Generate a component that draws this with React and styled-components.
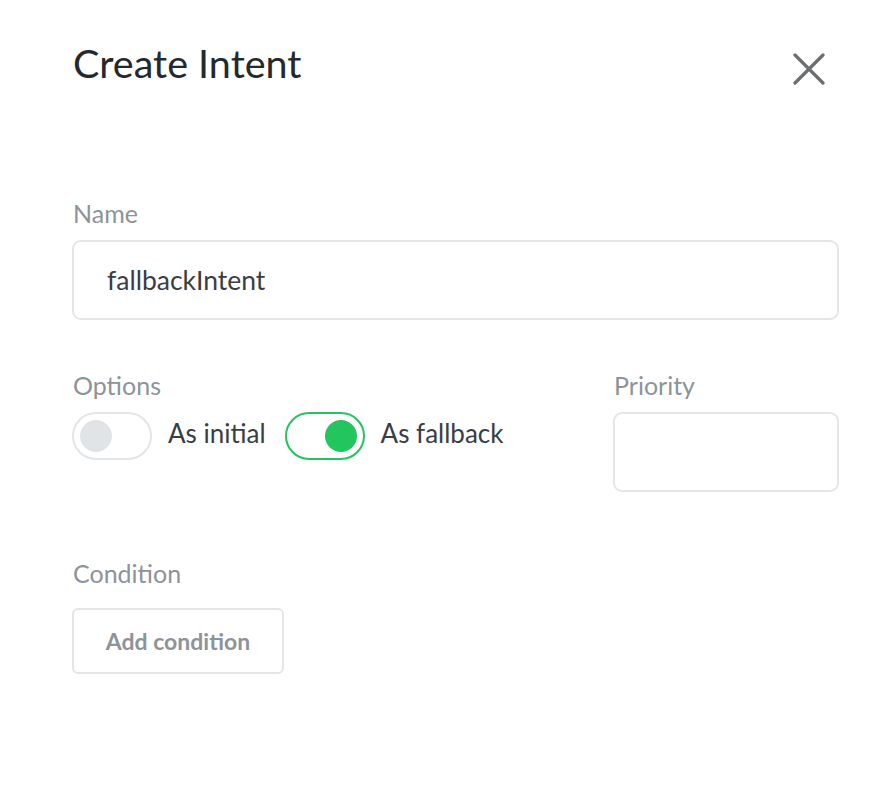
import React from "react";
import styled, { createGlobalStyle } from "styled-components";

const Global = createGlobalStyle`
  html, body { margin: 0; padding: 0; background: #fff; }
  body { font-family: "Lato", "Open Sans", sans-serif; -webkit-font-smoothing: antialiased; }
  * { box-sizing: border-box; }
`;

const Panel = styled.div`
  width: 892px;
  height: 808px;
  padding: 40px 53px 0 72px;
  display: flex;
  flex-direction: column;
`;

const Header = styled.div`
  display: flex;
  justify-content: space-between;
  align-items: flex-start;
  margin-bottom: 112px;
`;

const Title = styled.h1`
  margin: 0;
  padding-left: 1px;
  font-size: 39.5px;
  line-height: 46px;
  font-weight: 400;
  color: #25282c;
`;

const CloseButton = styled.button`
  border: none;
  background: none;
  padding: 0;
  width: 32px;
  height: 32px;
  margin-top: 13px;
  margin-right: 14px;
  display: flex;
  cursor: pointer;
`;

const Label = styled.div`
  font-size: 25px;
  line-height: 30px;
  color: #8e9398;
  padding-left: 1px;
  margin-bottom: ${(p) => p.$gap || 12}px;
`;

const TextInput = styled.div`
  height: 80px;
  border: 2px solid #e3e6e9;
  border-radius: 9px;
  display: flex;
  align-items: center;
  padding-left: 33px;
  font-size: 26.5px;
  color: #3a3e43;
`;

const Row = styled.div`
  display: flex;
  justify-content: space-between;
  margin-top: 50px;
`;

const Col = styled.div`
  display: flex;
  flex-direction: column;
`;

const Toggles = styled.div`
  display: flex;
  align-items: center;
`;

const Switch = styled.div`
  width: 80px;
  height: 48px;
  border: 2px solid ${(p) => (p.$on ? "#22c55e" : "#e3e6e9")};
  border-radius: 24px;
  display: flex;
  align-items: center;
  justify-content: ${(p) => (p.$on ? "flex-end" : "flex-start")};
  padding: 0 6px;
`;

const Knob = styled.div`
  width: 32px;
  height: 32px;
  border-radius: 50%;
  background: ${(p) => (p.$on ? "#22c55e" : "#e1e4e7")};
`;

const SwitchText = styled.span`
  font-size: 26px;
  line-height: 32px;
  padding-bottom: 6px;
  color: #3a3e43;
  margin-left: 16px;
  margin-right: ${(p) => p.$mr || 0}px;
`;

const PriorityInput = styled.div`
  width: 226px;
  height: 80px;
  border: 2px solid #e3e6e9;
  border-radius: 9px;
`;

const Section = styled.div`
  margin-top: 66px;
`;

const Button = styled.button`
  width: 212px;
  height: 66px;
  border: 2px solid #e3e6e9;
  border-radius: 6px;
  background: #fff;
  font-family: inherit;
  font-size: 23px;
  font-weight: 700;
  color: #8e9398;
  cursor: pointer;
`;

export default function App() {
  return (
    <>
      <Global />
      <Panel>
        <Header>
          <Title>Create Intent</Title>
          <CloseButton aria-label="Close">
            <svg width="32" height="32" viewBox="0 0 32 32">
              <path d="M2 2 L30 30 M30 2 L2 30" stroke="#6b6e72" strokeWidth="3.2" strokeLinecap="round" fill="none" />
            </svg>
          </CloseButton>
        </Header>

        <Label $gap={12}>Name</Label>
        <TextInput>fallbackIntent</TextInput>

        <Row>
          <Col>
            <Label $gap={12}>Options</Label>
            <Toggles>
              <Switch>
                <Knob />
              </Switch>
              <SwitchText $mr={19}>As initial</SwitchText>
              <Switch $on>
                <Knob $on />
              </Switch>
              <SwitchText>As fallback</SwitchText>
            </Toggles>
          </Col>
          <Col>
            <Label $gap={12}>Priority</Label>
            <PriorityInput />
          </Col>
        </Row>

        <Section>
          <Label $gap={20}>Condition</Label>
          <Button>Add condition</Button>
        </Section>
      </Panel>
    </>
  );
}
